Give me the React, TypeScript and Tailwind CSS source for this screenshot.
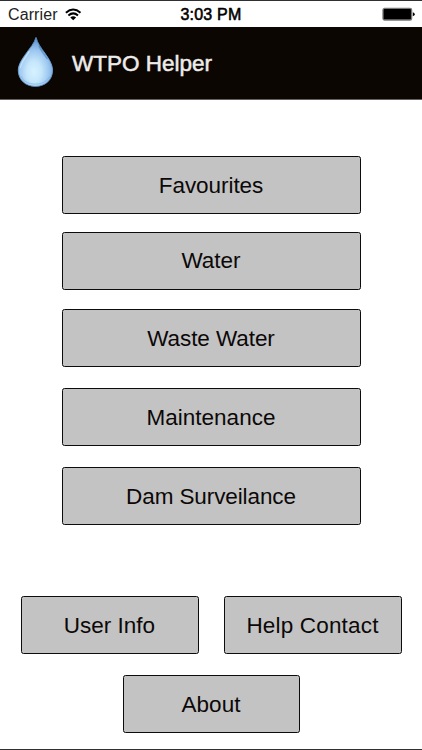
import type { ReactNode } from "react";

function MenuButton({ className = "", label = "", children }: { className?: string; label?: string; children: ReactNode }) {
  return (
    <button
      className={`flex h-[58px] shrink-0 items-center justify-center whitespace-nowrap rounded-[2.5px] border border-[#0c0c0c] bg-[#c3c3c3] pt-[2px] text-[22.5px] leading-[26px] text-[#0c0808] ${className}`}
    >
      <span className={label}>{children}</span>
    </button>
  );
}

function WifiIcon() {
  return (
    <svg className="ml-[7px] h-[13px] w-[17px]" viewBox="0 0 17 13" fill="none" stroke="#000">
      <path d="M0.9 4.7Q8.2 -1.6 15.5 4.7" strokeWidth="2" />
      <path d="M3.4 7.5Q8.2 3.3 13 7.5" strokeWidth="2" />
      <path d="M8.2 12.2L5.3 9.4Q8.2 7.2 11.1 9.4Z" fill="#000" stroke="none" />
    </svg>
  );
}

function BatteryIcon() {
  return (
    <svg className="h-[14px] w-[34px]" viewBox="0 0 34 14">
      <rect x="1" y="1.4" width="28.6" height="11.6" rx="1.6" fill="#000" stroke="#777" strokeWidth="1.3" />
      <path d="M30.8 5.2Q32.7 5.5 32.7 7.2T30.8 9.2Z" fill="#000" />
    </svg>
  );
}

function WaterDrop() {
  return (
    <svg className="ml-[17px] h-[52px] w-[37px] shrink-0" viewBox="0 0 37 52">
      <defs>
        <radialGradient id="body" cx="0.46" cy="0.7" r="0.62">
          <stop offset="0" stopColor="#d6f2ff" />
          <stop offset="0.35" stopColor="#c5e6fb" />
          <stop offset="0.7" stopColor="#9cc7f0" />
          <stop offset="1" stopColor="#6a9dd6" />
        </radialGradient>
        <linearGradient id="rim" x1="0" y1="0" x2="0" y2="1">
          <stop offset="0" stopColor="#548bc3" />
          <stop offset="0.65" stopColor="#78a9de" />
          <stop offset="1" stopColor="#5a87bd" />
        </linearGradient>
      </defs>
      <path
        d="M19 0.4C20.6 6.4 24.2 11 27.8 16.1C31.9 21.9 35.5 27.3 35.5 33.4C35.5 43.1 28 49.4 18.5 49.4C8.8 49.4 1.3 43 1.3 33.4C1.3 27.3 5.3 21.8 9.4 16C13 10.9 17.2 6.4 19 0.4Z"
        fill="url(#body)"
        stroke="url(#rim)"
        strokeWidth="0.9"
      />
      <path d="M12.4 14.4C8.6 19.8 4.4 25.2 3.3 31" fill="none" stroke="#dff5ff" strokeWidth="1.1" opacity="0.6" />
      <path d="M22 9C23.5 13 27.2 17.2 30.4 22.2" fill="none" stroke="#427ab5" strokeWidth="1.4" opacity="0.55" />
      <path d="M4 39.2C8.5 48.9 26.5 50.6 32.8 39.5" fill="none" stroke="#7caee5" strokeWidth="1.4" opacity="0.5" />
    </svg>
  );
}

export default function App() {
  return (
    <div className="flex h-[750px] w-[422px] flex-col overflow-hidden border-y border-[#303030] bg-white font-['Liberation_Sans',Arial,sans-serif]">
      <div className="grid h-[26px] shrink-0 grid-cols-3 items-center text-black">
        <div className="flex items-center pl-[8px] text-[16px] leading-[20px]">
          <span className="pt-[2px] tracking-[0.1px] text-[#222]">Carrier</span>
          <WifiIcon />
        </div>
        <div className="pt-[2px] text-center text-[16px] leading-[20px] tracking-[0.2px] [-webkit-text-stroke:0.55px_#000]">3:03 PM</div>
        <div className="flex justify-end pr-[6px]">
          <BatteryIcon />
        </div>
      </div>

      <header className="flex h-[73px] shrink-0 items-center border-b border-[#625f5e] bg-[#0c0603]">
        <WaterDrop />
        <h1 className="ml-[18px] whitespace-nowrap pt-[2px] text-[22.5px] leading-[26px] text-[#eeecea] [-webkit-text-stroke:0.5px_#eeecea]">
          WTPO Helper
        </h1>
      </header>

      <main className="flex flex-col items-center pt-[56px]">
        <MenuButton className="w-[299px]" label="tracking-[-0.05px]">Favourites</MenuButton>
        <MenuButton className="mt-[18px] w-[299px]" label="pb-[2px]">Water</MenuButton>
        <MenuButton className="mt-[19px] w-[299px]" label="tracking-[-0.08px]">Waste Water</MenuButton>
        <MenuButton className="mt-[21px] w-[299px]">Maintenance</MenuButton>
        <MenuButton className="mt-[21px] w-[299px]" label="tracking-[-0.1px]">Dam Surveilance</MenuButton>
        <div className="mt-[71px] flex gap-[25px]">
          <MenuButton className="w-[178px]">User Info</MenuButton>
          <MenuButton className="w-[178px]" label="tracking-[0.18px]">Help Contact</MenuButton>
        </div>
        <MenuButton className="mt-[21px] w-[177px]">About</MenuButton>
      </main>
    </div>
  );
}
